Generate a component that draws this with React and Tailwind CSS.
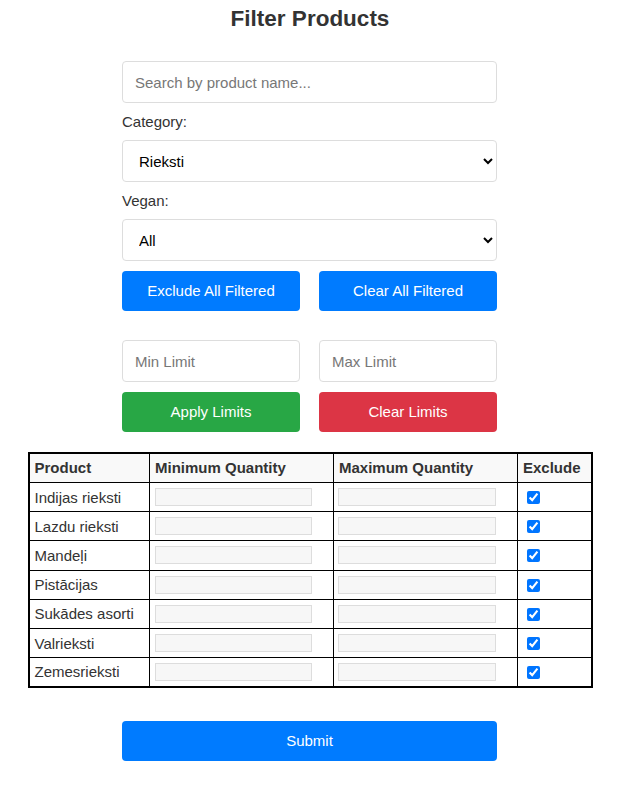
import { useState } from 'react'

const products = [
  'Indijas rieksti',
  'Lazdu rieksti',
  'Mandeļi',
  'Pistācijas',
  'Sukādes asorti',
  'Valrieksti',
  'Zemesrieksti',
]

export default function App() {
  const [excluded, setExcluded] = useState(products.map(() => true))

  return (
    <div className="min-h-[785px] bg-white font-['Liberation_Sans',Arial,sans-serif] text-[15px] text-[#333]">
      <h1 className="pt-[6px] text-center text-[22.5px] leading-[25px] font-bold text-[#333]">
        Filter Products
      </h1>

      {/* Filters */}
      <div className="mt-[30px] ml-[122px] w-[375px]">
        <input
          type="text"
          placeholder="Search by product name..."
          className="block h-[42px] w-full rounded-[4px] border border-[#ddd] px-3 text-[15px] text-black placeholder-[#777] outline-none"
        />
        <label className="mt-[10px] block leading-[17px]">Category:</label>
        <select
          defaultValue="Rieksti"
          className="mt-[10px] block h-[42px] w-full rounded-[4px] border border-[#ddd] bg-white px-3 text-[15px] text-black"
        >
          <option>Rieksti</option>
        </select>
        <label className="mt-[10px] block leading-[17px]">Vegan:</label>
        <select
          defaultValue="All"
          className="mt-[10px] block h-[42px] w-full rounded-[4px] border border-[#ddd] bg-white px-3 text-[15px] text-black"
        >
          <option>All</option>
        </select>

        <div className="mt-[10px] flex justify-between">
          <button className="h-[40px] w-[178px] rounded-[4px] bg-[#007bff] text-white">
            Exclude All Filtered
          </button>
          <button className="h-[40px] w-[178px] rounded-[4px] bg-[#007bff] text-white">
            Clear All Filtered
          </button>
        </div>

        <div className="mt-[29px] flex justify-between">
          <input
            type="text"
            placeholder="Min Limit"
            className="h-[42px] w-[178px] rounded-[4px] border border-[#ddd] px-3 text-[15px] placeholder-[#777] outline-none"
          />
          <input
            type="text"
            placeholder="Max Limit"
            className="h-[42px] w-[178px] rounded-[4px] border border-[#ddd] px-3 text-[15px] placeholder-[#777] outline-none"
          />
        </div>
        <div className="mt-[10px] flex justify-between">
          <button className="h-[40px] w-[178px] rounded-[4px] bg-[#28a745] text-white">
            Apply Limits
          </button>
          <button className="h-[40px] w-[178px] rounded-[4px] bg-[#dc3545] text-white">
            Clear Limits
          </button>
        </div>
      </div>

      {/* Products table */}
      <table className="mx-auto mt-[20px] w-[565px] border-collapse border-2 border-black text-left">
        <thead>
          <tr className="bg-[#f9f9f9]">
            <th className="w-[121px] border border-black px-[5px] py-[5px] leading-[18px] font-bold">Product</th>
            <th className="w-[184px] border border-black px-[5px] py-[5px] leading-[18px] font-bold">Minimum Quantity</th>
            <th className="w-[184px] border border-black px-[5px] py-[5px] leading-[18px] font-bold">Maximum Quantity</th>
            <th className="border border-black px-[5px] py-[5px] leading-[18px] font-bold">Exclude</th>
          </tr>
        </thead>
        <tbody>
          {products.map((name, i) => (
            <tr key={name}>
              <td className="h-[29.2px] border border-black px-[5px] py-0 leading-[17px]">{name}</td>
              <td className="h-[29.2px] border border-black px-[5px] py-0">
                <input type="text" className="block h-[18px] w-[157px] border border-[#ddd] bg-[#f7f7f7] outline-none" />
              </td>
              <td className="h-[29.2px] border border-black px-[4px] py-0">
                <input type="text" className="block h-[18px] w-[158px] border border-[#ddd] bg-[#f7f7f7] outline-none" />
              </td>
              <td className="h-[29.2px] border border-black px-[5px] py-0">
                <input
                  type="checkbox"
                  checked={excluded[i]}
                  onChange={() => setExcluded(excluded.map((v, j) => (j === i ? !v : v)))}
                  className="mt-[1px] ml-[4px] block h-[13px] w-[13px]"
                />
              </td>
            </tr>
          ))}
        </tbody>
      </table>

      <div className="mt-[33px] ml-[122px] w-[375px]">
        <button className="h-[40px] w-full rounded-[4px] bg-[#007bff] text-white">Submit</button>
      </div>
    </div>
  )
}
